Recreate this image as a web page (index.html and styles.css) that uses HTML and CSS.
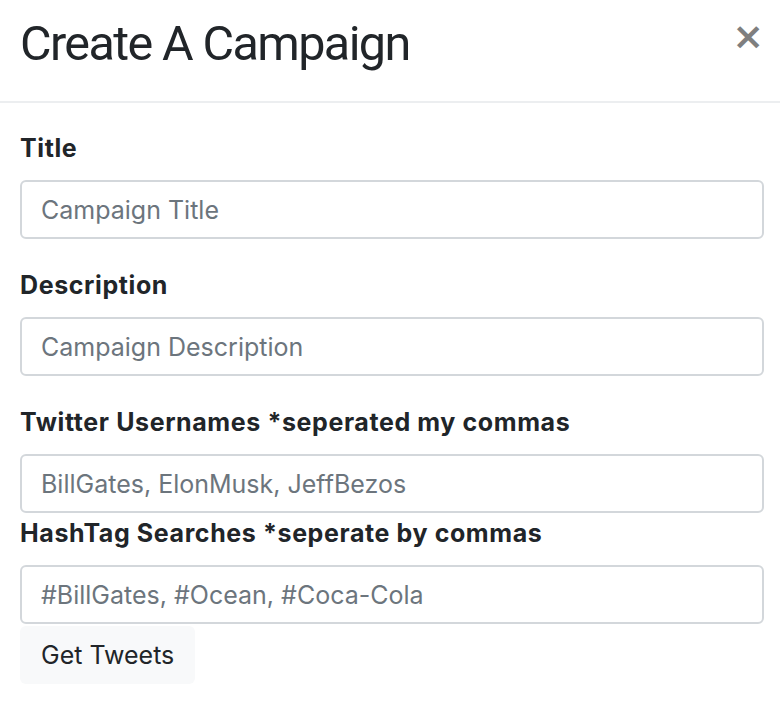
FILE: index.html
```html
<!DOCTYPE html>
<html lang="en">
<head>
<meta charset="utf-8">
<title>Create A Campaign</title>
<link rel="stylesheet" href="styles.css">
</head>
<body>
<div class="modal">
  <div class="modal-header">
    <h2 class="modal-title">Create A Campaign</h2>
    <button class="close" type="button" aria-label="Close">×</button>
  </div>
  <form class="modal-body">
    <div class="form-group">
      <label class="form-label" for="title">Title</label>
      <input class="form-control" id="title" type="text" placeholder="Campaign Title">
    </div>
    <div class="form-group">
      <label class="form-label" for="desc">Description</label>
      <input class="form-control" id="desc" type="text" placeholder="Campaign Description">
    </div>
    <div class="form-group tight">
      <label class="form-label" for="users">Twitter Usernames *seperated my commas</label>
      <input class="form-control" id="users" type="text" placeholder="BillGates, ElonMusk, JeffBezos">
    </div>
    <div class="form-group tight">
      <label class="form-label" for="tags">HashTag Searches *seperate by commas</label>
      <input class="form-control" id="tags" type="text" placeholder="#BillGates, #Ocean, #Coca-Cola">
    </div>
    <button class="btn" type="button">Get Tweets</button>
  </form>
</div>
</body>
</html>
```

FILE: styles.css
```css
html, body {
  margin: 0;
  padding: 0;
  background: #fff;
}

body {
  font-family: Inter, "Noto Sans", "Liberation Sans", sans-serif;
  color: #212529;
}

.modal {
  width: 780px;
}

.modal-header {
  display: flex;
  justify-content: space-between;
  align-items: flex-start;
  padding: 14px 16px 27px 20px;
  border-bottom: 2px solid #eceef0;
}

.modal-title {
  margin: 0;
  font-family: Roboto, Inter, sans-serif;
  font-size: 48.5px;
  font-weight: 400;
  line-height: 60px;
  letter-spacing: -1.6px;
}

.close {
  border: 0;
  background: transparent;
  padding: 0;
  margin: 4px 0 0 0;
  font-family: "DejaVu Sans", sans-serif;
  font-size: 38px;
  font-weight: 700;
  line-height: 36px;
  color: #7f7f7f;
  cursor: pointer;
}

.modal-body {
  display: block;
  margin: 0;
  padding: 27px 16px 20px 20px;
}

.form-group {
  margin-bottom: 28px;
}

.form-group.tight {
  margin-bottom: 2px;
}

.form-label {
  display: block;
  font-size: 25px;
  font-weight: 700;
  line-height: 37.5px;
  letter-spacing: 0.6px;
  margin-bottom: 12.5px;
}

.form-control {
  display: block;
  box-sizing: border-box;
  width: 744px;
  height: 59px;
  margin: 0;
  padding: 0 19px;
  border: 2px solid #d3d7db;
  border-radius: 6px;
  font-family: inherit;
  font-size: 25px;
  color: #495057;
  background: #fff;
}

.form-control::placeholder {
  color: #6c757d;
  opacity: 1;
}

.btn {
  display: block;
  box-sizing: border-box;
  height: 58px;
  padding: 0 21px;
  border: 0;
  border-radius: 6px;
  background: #f8f9fa;
  font-family: inherit;
  font-size: 25px;
  color: #212529;
  cursor: pointer;
}
```
